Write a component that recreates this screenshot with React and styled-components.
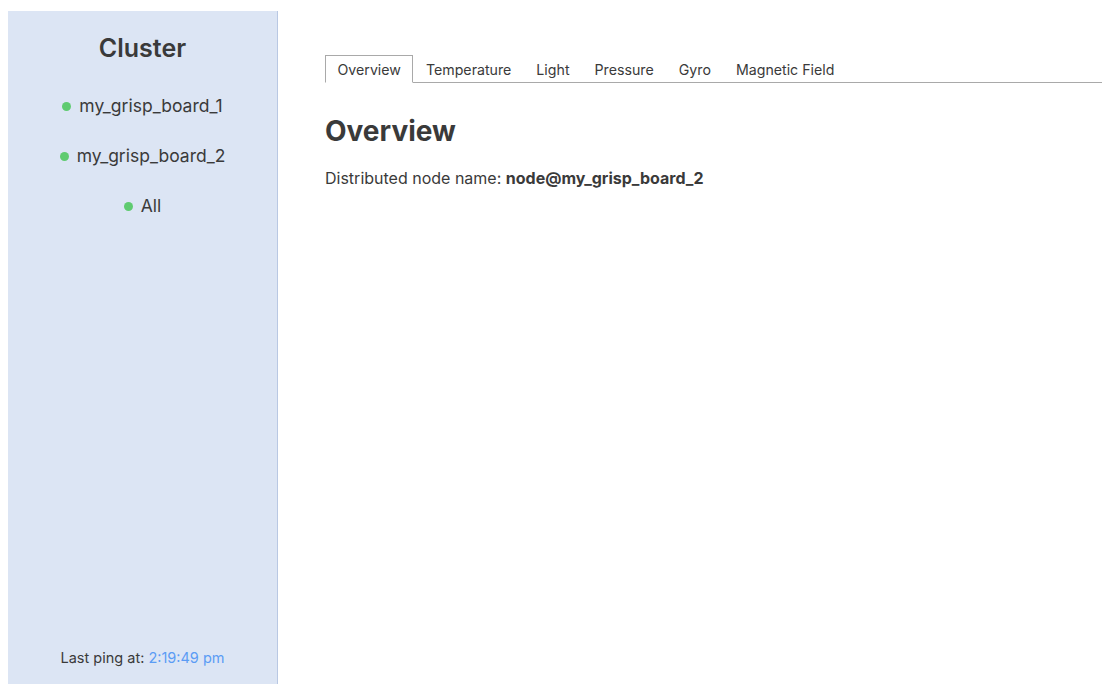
import React, { useState } from "react";
import styled, { createGlobalStyle } from "styled-components";

const GlobalStyle = createGlobalStyle`
  html, body {
    margin: 0;
    padding: 0;
    background: #ffffff;
  }
  body {
    font-family: Inter, "Open Sans", "Liberation Sans", sans-serif;
    color: #3a3a3a;
  }
`;

const Layout = styled.div`
  display: flex;
  height: 100vh;
  padding: 11px 0 0 8px;
  box-sizing: border-box;
`;

const Sidebar = styled.aside`
  width: 269px;
  flex-shrink: 0;
  background: #dce5f4;
  border-right: 1px solid #b9c8e3;
  display: flex;
  flex-direction: column;
  align-items: center;
`;

const ClusterTitle = styled.h2`
  margin: 22px 0 31px;
  font-size: 25px;
  font-weight: 600;
  color: #3a3a3a;
`;

const NodeList = styled.ul`
  list-style: none;
  margin: 0;
  padding: 0;
  display: flex;
  flex-direction: column;
  align-items: center;
  gap: 26px;
`;

const NodeItem = styled.li`
  display: flex;
  align-items: center;
  gap: 8px;
  font-size: 17.5px;
  line-height: 24px;
  cursor: pointer;
`;

const Dot = styled.span`
  width: 9px;
  height: 9px;
  border-radius: 50%;
  background: ${(p) => (p.$online ? "#5fcb70" : "#d0d0d0")};
`;

const Ping = styled.div`
  margin-top: auto;
  margin-bottom: 18px;
  font-size: 14.5px;
`;

const PingTime = styled.span`
  color: #5b9cf4;
`;

const Main = styled.main`
  flex: 1;
  padding: 44px 0 0 47px;
`;

const TabBar = styled.div`
  display: flex;
  border-bottom: 1px solid #a9a9a9;
`;

const Tab = styled.button`
  font-family: inherit;
  font-size: 14.2px;
  color: #3a3a3a;
  background: ${(p) => (p.$active ? "#fff" : "transparent")};
  padding: 0 11.5px;
  height: 28px;
  margin-bottom: -1px;
  border: 1px solid ${(p) => (p.$active ? "#a9a9a9" : "transparent")};
  border-bottom-color: ${(p) => (p.$active ? "#fff" : "transparent")};
  cursor: pointer;
`;

const Heading = styled.h1`
  margin: 31px 0 20px;
  font-size: 28px;
  font-weight: 700;
  color: #3a3a3a;
`;

const Info = styled.p`
  margin: 0;
  font-size: 16px;
`;

const tabs = ["Overview", "Temperature", "Light", "Pressure", "Gyro", "Magnetic Field"];
const nodes = ["my_grisp_board_1", "my_grisp_board_2", "All"];

export default function App() {
  const [active, setActive] = useState("Overview");
  return (
    <>
      <GlobalStyle />
      <Layout>
        <Sidebar>
          <ClusterTitle>Cluster</ClusterTitle>
          <NodeList>
            {nodes.map((n) => (
              <NodeItem key={n}>
                <Dot $online />
                {n}
              </NodeItem>
            ))}
          </NodeList>
          <Ping>
            Last ping at: <PingTime>2:19:49 pm</PingTime>
          </Ping>
        </Sidebar>
        <Main>
          <TabBar>
            {tabs.map((t) => (
              <Tab key={t} $active={t === active} onClick={() => setActive(t)}>
                {t}
              </Tab>
            ))}
          </TabBar>
          <Heading>{active}</Heading>
          <Info>
            Distributed node name: <b>node@my_grisp_board_2</b>
          </Info>
        </Main>
      </Layout>
    </>
  );
}
